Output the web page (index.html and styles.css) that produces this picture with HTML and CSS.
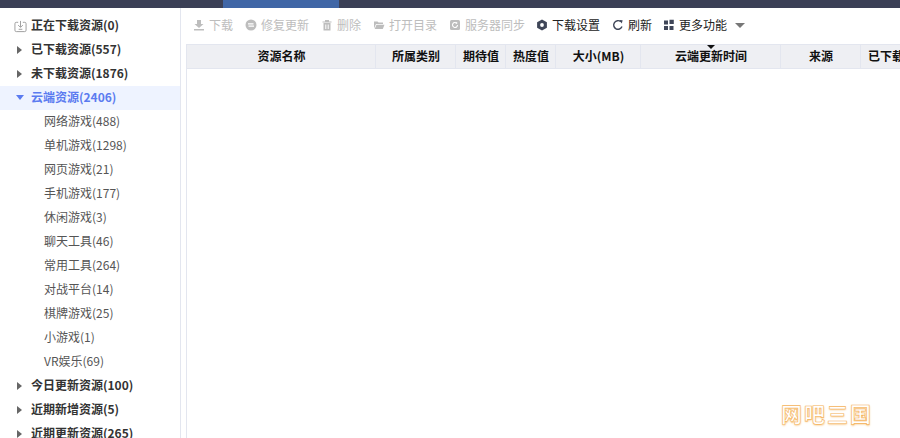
FILE: index.html
```html
<!DOCTYPE html>
<html lang="zh-CN">
<head>
    <meta charset="UTF-8">
    <meta name="viewport" content="width=device-width, initial-scale=1.0">
    <title>资源管理</title>
    <link rel="stylesheet" href="styles.css">
</head>
<body>

    <!-- top bar -->
    <div class="top_bar">
        <div class="top_active"></div>
    </div>

    <div class="app_body">

        <!-- SIDEBAR -->
        <div class="sidebar">
            <div class="tree_row bold">
                <svg class="tree_icon" width="13" height="13" viewBox="0 0 14 14"><path d="M4.500 2.500H2.500Q1 2.500 1 4V11Q1 12.500 2.500 12.500H11.500Q13 12.500 13 11V4Q13 2.500 11.500 2.500H9.500" fill="none" stroke="#999"/><path d="M7 1V7.500M4.500 5.500L7 8L9.500 5.500M5 10H9" fill="none" stroke="#999"/></svg>
                正在下载资源(0)
            </div>
            <div class="tree_row bold"><span class="arrow_right"></span>已下载资源(557)</div>
            <div class="tree_row bold"><span class="arrow_right"></span>未下载资源(1876)</div>
            <div class="tree_row bold active"><span class="arrow_down"></span>云端资源(2406)</div>
            <div class="tree_row sub">网络游戏(488)</div>
            <div class="tree_row sub">单机游戏(1298)</div>
            <div class="tree_row sub">网页游戏(21)</div>
            <div class="tree_row sub">手机游戏(177)</div>
            <div class="tree_row sub">休闲游戏(3)</div>
            <div class="tree_row sub">聊天工具(46)</div>
            <div class="tree_row sub">常用工具(264)</div>
            <div class="tree_row sub">对战平台(14)</div>
            <div class="tree_row sub">棋牌游戏(25)</div>
            <div class="tree_row sub">小游戏(1)</div>
            <div class="tree_row sub">VR娱乐(69)</div>
            <div class="tree_row bold"><span class="arrow_right"></span>今日更新资源(100)</div>
            <div class="tree_row bold"><span class="arrow_right"></span>近期新增资源(5)</div>
            <div class="tree_row bold"><span class="arrow_right"></span>近期更新资源(265)</div>
        </div>

        <!-- MAIN -->
        <div class="main">
            <div class="toolbar">
                <div class="tool disabled">
                    <svg width="12" height="12" viewBox="0 0 12 12"><path d="M4 1H8V5H10.500L6 9L1.500 5H4ZM1 10H11V11.500H1Z" fill="#bdbdbd"/></svg>
                    下载
                </div>
                <div class="tool disabled">
                    <svg width="12" height="12" viewBox="0 0 12 12"><circle cx="6" cy="6" r="5.500" fill="#bdbdbd"/><path d="M3 4.800H8.500M9 7.200H3.500" stroke="#fff" stroke-width="1.200"/></svg>
                    修复更新
                </div>
                <div class="tool disabled">
                    <svg width="12" height="12" viewBox="0 0 12 12"><path d="M1.500 2.500H10.500V3.500H1.500ZM4 1H8V2.500H4ZM2.500 4H9.500V11.500H2.500Z" fill="#bdbdbd"/><path d="M4.800 5.500V10M7.200 5.500V10" stroke="#fff"/></svg>
                    删除
                </div>
                <div class="tool disabled">
                    <svg width="12" height="12" viewBox="0 0 12 12"><path d="M1 2.500H4.500L5.500 3.500H10V5H3L1 9.500ZM3.500 5.800H11.500L9.800 10H1.700Z" fill="#bdbdbd"/></svg>
                    打开目录
                </div>
                <div class="tool disabled tight">
                    <svg width="12" height="12" viewBox="0 0 12 12"><rect x="1" y="1" width="10" height="10" rx="1.500" fill="#bdbdbd"/><path d="M8.500 6A2.500 2.500 0 1 1 7.500 4" fill="none" stroke="#fff" stroke-width="1.100"/><path d="M6.800 2.700L8.800 4L6.800 5.200Z" fill="#fff"/></svg>
                    服务器同步
                </div>
                <div class="tool">
                    <svg width="12" height="12" viewBox="0 0 12 12"><path d="M6 .4L10.900 3.200V8.800L6 11.600L1.100 8.800V3.200Z" fill="#3f4658"/><circle cx="6" cy="6" r="1.900" fill="#fff"/></svg>
                    下载设置
                </div>
                <div class="tool tight">
                    <svg width="12" height="12" viewBox="0 0 12 12"><path d="M10 7.500A4.300 4.300 0 1 1 8.800 2.700" fill="none" stroke="#3f4658" stroke-width="1.400"/><path d="M7.400 1L10.600 1.200L9.800 4.400Z" fill="#3f4658"/></svg>
                    刷新
                </div>
                <div class="tool">
                    <svg width="12" height="12" viewBox="0 0 12 12"><path d="M1 1.500H5V5.500H1ZM6.500 .8H10.800V5.100H6.500ZM1 7H5V11H1ZM6.500 7H10.500V11H6.500Z" fill="#3f4658"/></svg>
                    更多功能
                    <span class="more_arrow"></span>
                </div>
            </div>

            <div class="table_wrap">
                <div class="table_head">
                    <div class="th col_name">资源名称</div>
                    <div class="th col_type">所属类别</div>
                    <div class="th col_expect">期待值</div>
                    <div class="th col_hot">热度值</div>
                    <div class="th col_size">大小(MB)</div>
                    <div class="th col_time"><span class="sort_arrow"></span>云端更新时间</div>
                    <div class="th col_from">来源</div>
                    <div class="th col_done">已下载</div>
                </div>
            </div>
        </div>
    </div>

    <div class="watermark">网吧三国</div>

</body>
</html>
```

FILE: styles.css
```css
html, body
{
    height: 100%;
}
body
{
    margin: 0;
    overflow: hidden;
    background-color: #fff;
    font-family: "Noto Sans CJK SC", "Noto Sans", sans-serif;
    font-size: 12px;
    color: #333;
}

/* top bar */
.top_bar
{
    height: 8px;
    background-color: #3b4056;
    padding-left: 223px;
}
.top_active
{
    width: 116px;
    height: 8px;
    background-color: #4066a6;
}

.app_body
{
    display: flex;
    height: 430px;
}

/* sidebar */
.sidebar
{
    width: 180px;
    flex: none;
    padding-top: 6px;
    border-right: 1px solid #e3e6ef;
    overflow: hidden;
}
.tree_row
{
    display: flex;
    align-items: center;
    box-sizing: border-box;
    height: 24px;
    padding-left: 31px;
    padding-bottom: 4px;
    position: relative;
    white-space: nowrap;
}
.tree_row.bold
{
    font-weight: 700;
}
.tree_row.sub
{
    padding-left: 44px;
    color: #555;
}
.tree_row.active
{
    background-color: #eef3ff;
    color: #5b7bf0;
}
.tree_icon
{
    position: absolute;
    left: 14px;
    top: 6px;
}
.arrow_right
{
    position: absolute;
    left: 17px;
    top: 8px;
    border-left: 5px solid #666;
    border-top: 4px solid transparent;
    border-bottom: 4px solid transparent;
}
.arrow_down
{
    position: absolute;
    left: 16px;
    top: 9px;
    border-top: 5px solid #5b7bf0;
    border-left: 4px solid transparent;
    border-right: 4px solid transparent;
}

/* toolbar */
.main
{
    flex: 1;
    min-width: 0;
    overflow: hidden;
}
.toolbar
{
    display: flex;
    align-items: center;
    height: 32px;
    padding-left: 12px;
    padding-bottom: 4px;
    gap: 12px;
}
.tool
{
    display: flex;
    align-items: center;
    gap: 4px;
    white-space: nowrap;
    color: #222;
}
.tool svg
{
    margin-top: 2px;
}
.tool.tight
{
    margin-right: -1px;
}
.tool.disabled
{
    color: #bdbdbd;
}
.more_arrow
{
    margin-left: 4px;
    margin-top: 2px;
    border-top: 5px solid #777;
    border-left: 5px solid transparent;
    border-right: 5px solid transparent;
}

/* table */
.table_wrap
{
    margin-left: 5px;
    height: 394px;
    border-left: 1px solid #e3e6ef;
}
.table_head
{
    display: flex;
    width: 760px;
    height: 25px;
    box-sizing: border-box;
    background-color: #eeeff3;
    border-top: 1px solid #e3e6ef;
    border-bottom: 1px solid #e3e6ef;
}
.th
{
    flex: none;
    box-sizing: border-box;
    position: relative;
    padding-left: 1px;
    text-align: center;
    line-height: 21px;
    font-weight: 700;
    color: #111;
    border-right: 1px solid #e3e6ef;
    white-space: nowrap;
    overflow: hidden;
}
.col_name { width: 189px; }
.col_type { width: 80px; }
.col_expect { width: 50px; }
.col_hot { width: 50px; }
.col_size { width: 85px; }
.col_time { width: 140px; }
.col_from { width: 80px; }
.col_done { width: 80px; text-align: left; padding-left: 7px; }
.sort_arrow
{
    position: absolute;
    left: 66px;
    top: 0;
    border-top: 4px solid #111;
    border-left: 4px solid transparent;
    border-right: 4px solid transparent;
}

/* watermark over the page */
.watermark
{
    position: absolute;
    left: 781px;
    top: 400px;
    font-size: 21px;
    line-height: 26px;
    letter-spacing: 2px;
    font-weight: 700;
    color: #fff;
    white-space: nowrap;
    -webkit-text-stroke: .6px #f5b45c;
    text-shadow: 0 1px 2px #f7c27a;
}
```
